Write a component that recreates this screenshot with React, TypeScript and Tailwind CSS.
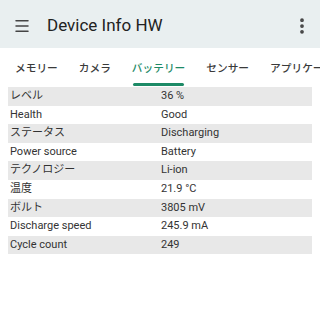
import { Menu, EllipsisVertical } from 'lucide-react'

const rows: [string, string][] = [
    ['レベル', '36 %'],
    ['Health', 'Good'],
    ['ステータス', 'Discharging'],
    ['Power source', 'Battery'],
    ['テクノロジー', 'Li-ion'],
    ['温度', '21.9 °C'],
    ['ボルト', '3805 mV'],
    ['Discharge speed', '245.9 mA'],
    ['Cycle count', '249'],
]

const tabs = ['メモリー', 'カメラ', 'バッテリー', 'センサー', 'アプリケーション']

export default function App() {
    return (
        <div
            className="w-[320px] h-[320px] overflow-hidden bg-white text-[#333]"
            style={{ fontFamily: 'Roboto, "Noto Sans CJK JP", sans-serif' }}
        >
            <div className="h-[48px] bg-[#e9eff0] flex items-center pt-[4px] pl-[13px] pr-[8px]">
                <Menu size={18} strokeWidth={2} className="text-[#444]" />
                <span className="ml-[16px] text-[17px] text-[#222]">Device Info HW</span>
                <EllipsisVertical size={20} strokeWidth={2.5} className="ml-auto text-[#444]" />
            </div>

            <div className="h-[38px] flex whitespace-nowrap pl-[15px] gap-[21px] text-[10.7px] font-medium text-[#3a3a3a] overflow-hidden">
                {tabs.map((t) => {
                    const active = t === 'バッテリー'
                    return (
                        <div key={t} className="relative flex items-center pt-[4px] shrink-0">
                            <span className={active ? 'text-[#1d8a66]' : ''}>{t}</span>
                            {active && (
                                <div className="absolute left-[1px] right-[1px] bottom-[0px] h-[3px] rounded-full bg-[#1d8a66]" />
                            )}
                        </div>
                    )
                })}
            </div>

            <div className="mx-[8px] mt-[1px] text-[11px]">
                {rows.map(([k, v], i) => (
                    <div
                        key={k}
                        className={`h-[18.6px] flex items-center ${i % 2 === 0 ? 'bg-[#e8e8e8]' : 'bg-white'}`}
                    >
                        <span className="w-[153px] pl-[2px]">{k}</span>
                        <span>{v}</span>
                    </div>
                ))}
            </div>
        </div>
    )
}
